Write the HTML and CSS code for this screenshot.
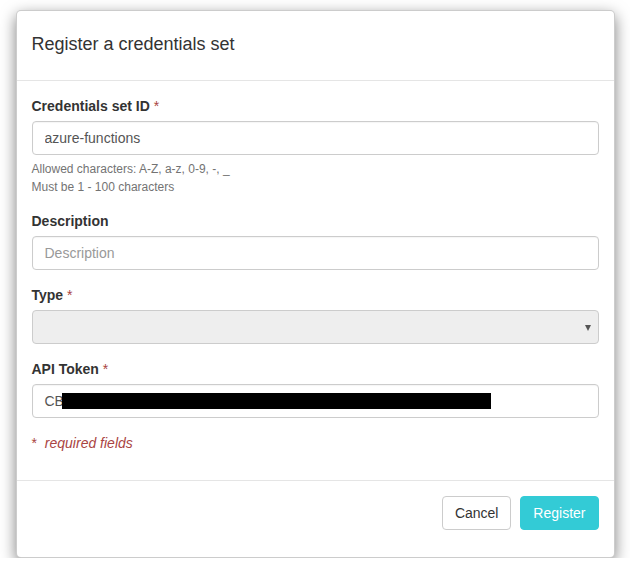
FILE: index.html
```html
<!DOCTYPE html>
<html lang="en">
<head>
    <meta charset="UTF-8">
    <meta name="viewport" content="width=device-width, initial-scale=1.0">
    <title>Register a credentials set</title>
    <link rel="stylesheet" href="styles.css">
</head>
<body>
    <div class="modal">
        <div class="modal-header">
            <h4 class="modal-title">Register a credentials set</h4>
        </div>

        <div class="modal-body">
            <div class="form-group">
                <label for="credId">Credentials set ID <span class="required">*</span></label>
                <input type="text" class="form-control" id="credId" value="azure-functions">
                <div class="help-block">
                    <div>Allowed characters: A-Z, a-z, 0-9, -, _</div>
                    <div>Must be 1 - 100 characters</div>
                </div>
            </div>

            <div class="form-group">
                <label for="description">Description</label>
                <input type="text" class="form-control" id="description" placeholder="Description">
            </div>

            <div class="form-group">
                <label for="type">Type <span class="required">*</span></label>
                <div class="select-box" id="type">
                    <span class="caret"></span>
                </div>
            </div>

            <div class="form-group">
                <label for="apiToken">API Token <span class="required">*</span></label>
                <div class="form-control token-field" id="apiToken">
                    <span>CB</span><span class="redacted"></span>
                </div>
            </div>

            <p class="required-note"><span class="star">*</span> required fields</p>
        </div>

        <div class="modal-footer">
            <button class="btn btn-default">Cancel</button>
            <button class="btn btn-primary">Register</button>
        </div>
    </div>
</body>
</html>
```

FILE: styles.css
```css
body {
    font-family: "Liberation Sans", Arial, sans-serif;
    font-size: 14px;
    line-height: 20px;
    color: #333;
    background-color: #fff;
    margin: 0;
    padding: 10px 0 0;
}

.modal {
    width: 599px;
    margin: 0 auto;
    box-sizing: border-box;
    background-color: #fff;
    border: 1px solid rgba(0, 0, 0, 0.2);
    border-radius: 5px;
    box-shadow: 0 5px 15px rgba(0, 0, 0, 0.5);
}

.modal-header {
    padding: 20px 15px 23px;
    border-bottom: 1px solid #e5e5e5;
}

.modal-title {
    margin: 0;
    font-size: 18px;
    font-weight: normal;
    line-height: 26px;
}

.modal-body {
    padding: 15px 15px 15px;
}

.form-group {
    margin-bottom: 15px;
}

label {
    display: block;
    font-weight: bold;
    margin-bottom: 5px;
}

.required {
    color: #a94442;
    font-weight: normal;
}

.form-control {
    display: block;
    width: 100%;
    height: 34px;
    box-sizing: border-box;
    padding: 6px 12px;
    font-family: inherit;
    font-size: 14px;
    line-height: 20px;
    color: #555;
    background-color: #fff;
    border: 1px solid #ccc;
    border-radius: 4px;
    box-shadow: inset 0 1px 1px rgba(0, 0, 0, 0.04);
    outline: none;
}

.form-control::placeholder {
    color: #999;
}

.help-block {
    margin-top: 5px;
    font-size: 12px;
    line-height: 18px;
    color: #737373;
}

.select-box {
    height: 34px;
    box-sizing: border-box;
    border: 1px solid #ccc;
    border-radius: 4px;
    background-color: #eee;
    display: flex;
    align-items: center;
    justify-content: flex-end;
    padding-right: 7px;
}

.caret {
    width: 0;
    height: 0;
    border-left: 3px solid transparent;
    border-right: 3px solid transparent;
    border-top: 6px solid #555;
    margin-top: 1px;
}

.token-field {
    display: flex;
    align-items: center;
}

.redacted {
    display: inline-block;
    width: 429px;
    height: 16px;
    margin-left: -2px;
    background-color: #000;
}

.required-note {
    margin: 0 0 12px;
    color: #a94442;
    font-style: italic;
}

.required-note .star {
    font-style: normal;
    margin-right: 4px;
}

.modal-footer {
    padding: 15px 15px 27px;
    border-top: 1px solid #e5e5e5;
    text-align: right;
}

.btn {
    font-family: inherit;
    font-size: 14px;
    line-height: 20px;
    padding: 6px 12px;
    border-radius: 4px;
    border: 1px solid transparent;
    cursor: pointer;
}

.btn + .btn {
    margin-left: 5px;
}

.btn-default {
    background-color: #fff;
    border-color: #ccc;
    color: #333;
}

.btn-primary {
    background-color: #33cbd6;
    border-color: #33cbd6;
    color: #fff;
}
```
